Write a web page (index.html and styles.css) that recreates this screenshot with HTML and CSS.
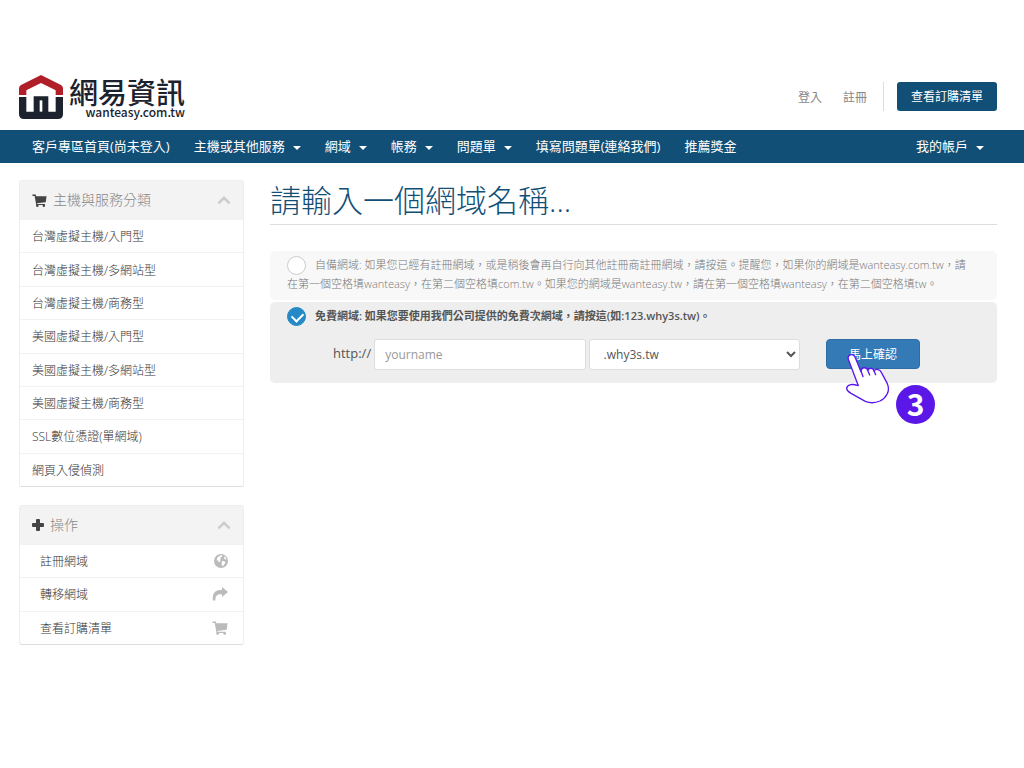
FILE: index.html
```
<!DOCTYPE html>
<html lang="zh-Hant">
<head>
<meta charset="utf-8">
<meta name="viewport" content="width=device-width, initial-scale=1">
<title>網易資訊</title>
<link rel="stylesheet" href="styles.css">
</head>
<body>
<svg class="sprite" aria-hidden="true">
  <symbol id="cart" viewBox="0 0 26 24">
    <path d="M0 1h6l.7 3H26l-1.500 11L8.500 17l.3 1.500H23v2H7L4 3.500H0z"/>
    <circle cx="9" cy="21.500" r="2.300"/><circle cx="21" cy="21.500" r="2.300"/>
  </symbol>
  <symbol id="chevron" viewBox="0 0 14 10"><path d="M7 1l6.500 6.500-1.800 1.800L7 4.700 2.300 9.300.5 7.500z"/></symbol>
</svg>

<header class="header">
  <a class="logo" href="#">
    <svg class="logo-mark" viewBox="0 0 132 132" aria-hidden="true">
      <path fill="#b01f27" d="M66 0l60 30q6 4 6 10v20H110V46L66 24 22 46v14H0V40q0-6 6-10z"/>
      <path fill="#1c222e" d="M0 66h22v44h22V64h44v46h22V66h22v51q0 15-15 15H15q-15 0-15-15z"/>
      <path fill="#fff" d="M62 76h8v34h-8z"/>
    </svg>
    <span class="logo-text">
      <span class="logo-name">網易資訊</span>
      <span class="logo-domain">wanteasy.com.tw</span>
    </span>
  </a>
  <div class="account">
    <a href="#">登入</a>
    <a href="#">註冊</a>
    <a class="order-button" href="#">查看訂購清單</a>
  </div>
</header>

<nav class="nav">
  <a href="#">客戶專區首頁(尚未登入)</a>
  <a class="drop" href="#">主機或其他服務</a>
  <a class="drop" href="#">網域</a>
  <a class="drop" href="#">帳務</a>
  <a class="drop" href="#">問題單</a>
  <a href="#">填寫問題單(連絡我們)</a>
  <a href="#">推薦獎金</a>
  <a class="drop nav-end" href="#">我的帳戶</a>
</nav>

<div class="page">
  <aside class="sidebar">
    <section class="panel">
      <h2 class="panel-title">
        <svg class="icon"><use href="#cart"/></svg>主機與服務分類
        <svg class="chevron"><use href="#chevron"/></svg>
      </h2>
      <div class="list">
        <a href="#">台灣虛擬主機/入門型</a>
        <a href="#">台灣虛擬主機/多網站型</a>
        <a href="#">台灣虛擬主機/商務型</a>
        <a href="#">美國虛擬主機/入門型</a>
        <a href="#">美國虛擬主機/多網站型</a>
        <a href="#">美國虛擬主機/商務型</a>
        <a href="#">SSL數位憑證(單網域)</a>
        <a href="#">網頁入侵偵測</a>
      </div>
    </section>
    <section class="panel">
      <h2 class="panel-title">
        <svg class="icon plus" viewBox="0 0 12 12"><path d="M4 1q0-1 1-1h2q1 0 1 1v3h3q1 0 1 1v2q0 1-1 1H8v3q0 1-1 1H5q-1 0-1-1V8H1Q0 8 0 7V5q0-1 1-1h3z"/></svg>操作
        <svg class="chevron"><use href="#chevron"/></svg>
      </h2>
      <div class="list actions">
        <a href="#">註冊網域
          <svg viewBox="0 0 14 14"><circle cx="7" cy="7" r="7"/><path fill="#fff" d="M6.500 1.200l2 .3-.7 1.300-1.600.8.6 1.400-1.300 1.200 1 .5-.3 1.600-1.800-.9-1.600-1.800.6-2.200zM8.300 6.800l2.300.6 1 1.300-1.400 1.600-1.500 2.200-1.100-2.200.2-1.500zM10.300 2.300l1.500 1.500.7 1.900-1.600-.4-.9-1.300z"/></svg>
        </a>
        <a href="#">轉移網域
          <svg class="wide" viewBox="0 0 16 14"><path d="M10 0l6 5-6 5V7.300C5 7 3.200 9 3.400 13.500H1Q-1 3 10 2.700z"/></svg>
        </a>
        <a href="#">查看訂購清單
          <svg class="wide"><use href="#cart"/></svg>
        </a>
      </div>
    </section>
  </aside>

  <main class="main">
    <h1 class="title">請輸入一個網域名稱...</h1>
    <form class="options">
      <div class="option">
        <input class="radio" type="radio" name="source" id="own">
        <label for="own">自備網域: 如果您已經有註冊網域，或是稍後會再自行向其他註冊商註冊網域，請按這。提醒您，如果你的網域是wanteasy.com.tw，請在第一個空格填wanteasy，在第二個空格填com.tw。如果您的網域是wanteasy.tw，請在第一個空格填wanteasy，在第二個空格填tw。</label>
      </div>
      <div class="option selected">
        <input class="radio" type="radio" name="source" id="free" checked>
        <label for="free">免費網域: 如果您要使用我們公司提供的免費次網域，請按這(如:123.why3s.tw)。</label>
        <div class="fields">
          <label class="protocol" for="name">http://</label>
          <input class="field" type="text" id="name" placeholder="yourname">
          <select class="field" aria-label="網域尾碼"><option>.why3s.tw</option></select>
          <div class="submit">
            <button class="submit-button" type="button">馬上確認</button>
            <svg class="pointer" viewBox="225 335 141 159" aria-hidden="true">
              <path d="M236 360C229 344 249 336 255 350L273 394C273 378 291 380 293 390C298 380 311 383 312 392C319 383 330 388 334 396L352 430C362 452 348 473 330 482C309 491 298 488 286 483L243 459C235 454 229 450 230 443C233 430 249 431 265 436Z"/>
              <path d="M273 392l6 17M293 390l6 14M312 391l5 12"/>
            </svg>
            <span class="step">3</span>
          </div>
        </div>
      </div>
    </form>
  </main>
</div>
</body>
</html>
```
FILE: styles.css
```
* { box-sizing: border-box; }

body {
  margin: 0;
  background: #fff;
  color: #666;
  font-family: "Open Sans", "Noto Sans CJK TC", sans-serif;
  font-size: 12px;
}

a { color: inherit; text-decoration: none; }
svg { fill: currentColor; }
.sprite { display: none; }

/* Header */
.header {
  display: flex;
  justify-content: space-between;
  align-items: flex-start;
  padding: 75px 27px 11px 19px;
}
.logo { display: flex; gap: 6px; color: #1c222e; }
.logo-mark { width: 44px; height: 44px; }
.logo-text {
  display: flex;
  flex-direction: column;
  align-items: flex-end;
  font-family: "Noto Sans CJK TC", sans-serif;
}
.logo-name { font-size: 29px; font-weight: 500; line-height: 32px; }
.logo-domain { font-size: 12px; font-weight: 500; line-height: 9px; }

.account {
  display: flex;
  align-items: center;
  gap: 21px;
  padding-top: 7px;
  color: #888;
}
.order-button {
  position: relative;
  margin-left: 9px;
  padding: 0 14px;
  border-radius: 3px;
  background: #114f77;
  color: #fff;
  line-height: 29px;
}
.order-button::before {
  content: "";
  position: absolute;
  left: -14px;
  top: 0;
  height: 100%;
  border-left: 1px solid #ddd;
}

/* Navigation */
.nav {
  display: flex;
  gap: 24px;
  padding: 0 40px 0 32px;
  background: #114f77;
  color: #fff;
  font-size: 13px;
  line-height: 33px;
}
.nav a { white-space: nowrap; }
.drop::after {
  content: "";
  display: inline-block;
  margin-left: 8px;
  vertical-align: middle;
  border: 4px solid transparent;
  border-top-color: currentColor;
  border-bottom: 0;
}
.nav-end { margin-left: auto; }

/* Columns */
.page {
  display: grid;
  grid-template-columns: 225px 1fr;
  gap: 26px;
  padding: 17px 27px 0 19px;
}
.sidebar { display: grid; gap: 18px; align-content: start; }
.panel {
  border: 1px solid #eee;
  border-bottom-color: #ddd;
  border-radius: 3px;
}
.panel-title {
  display: flex;
  align-items: center;
  gap: 6px;
  margin: 0;
  padding: 0 12px;
  background: #f3f3f3;
  color: #888;
  font-size: 14px;
  font-weight: 300;
  line-height: 38px;
}
.icon { width: 15px; height: 13px; color: #444; }
.plus { width: 12px; height: 12px; }
.chevron { width: 14px; height: 10px; margin-left: auto; color: #ccc; }
.list {
  display: grid;
  grid-auto-rows: 1fr;
  min-height: 267px;
}
.actions { min-height: 100px; }
.list a {
  display: flex;
  align-items: center;
  justify-content: space-between;
  padding: 0 12px;
  border-top: 1px solid #f2f2f2;
  font-weight: 300;
  color: #333;
}
.actions a { padding: 0 15px 0 20px; }
.list svg { width: 14px; height: 14px; color: #bbb; }
.list .wide { width: 16px; }

/* Main */
.title {
  margin: 0 0 26px;
  padding-bottom: 4px;
  border-bottom: 1px solid #ddd;
  color: #114f77;
  font-size: 31px;
  font-weight: 300;
  line-height: 40px;
}
.options { display: grid; gap: 2px; }
.option {
  padding: 4px 22px 7px 17px;
  border-radius: 5px;
  background: #f8f8f8;
  color: #777;
  font-size: 11px;
  font-weight: 300;
  line-height: 19px;
}
.selected {
  padding-bottom: 13px;
  background: #eee;
  color: #555;
  font-weight: 600;
}
.radio {
  appearance: none;
  float: left;
  width: 19px;
  height: 19px;
  margin: 1px 9px -4px 0;
  border: 1px solid #ccc;
  border-radius: 50%;
  background: #fff;
}
.radio:checked { position: relative; border-color: #2489c5; background: #2489c5; }
.radio:checked::after {
  content: "";
  position: absolute;
  left: 4px;
  top: 4px;
  width: 9px;
  height: 6px;
  border: solid #fff;
  border-width: 0 0 2px 2px;
  transform: rotate(-45deg);
}
.fields {
  display: flex;
  gap: 3px;
  padding: 14px 55px 0 46px;
  clear: both;
}
.protocol { font-size: 13px; font-weight: 400; line-height: 28px; }
.field {
  flex: 1;
  min-width: 0;
  height: 31px;
  padding: 0 10px;
  border: 1px solid #ddd;
  border-radius: 3px;
  background: #fff;
  color: #555;
  font: 12px "Open Sans", sans-serif;
}
.field::placeholder { color: #999; }
.submit { position: relative; margin-left: 23px; }
.submit-button {
  height: 30px;
  padding: 0 22px;
  border: 1px solid #2e6da4;
  border-radius: 4px;
  background: #337ab7;
  color: #fff;
  font: 12px "Open Sans", "Noto Sans CJK TC", sans-serif;
}
.pointer {
  position: absolute;
  left: 19px;
  top: 13px;
  width: 47px;
  height: 53px;
  fill: #fff;
  stroke: #5a17ee;
  stroke-width: 4;
  stroke-linecap: round;
  stroke-linejoin: round;
}
.step {
  position: absolute;
  left: 70px;
  top: 46px;
  width: 39px;
  height: 39px;
  border-radius: 50%;
  background: #5a17e8;
  color: #fff;
  font: 700 30px/37px "Noto Sans CJK TC", sans-serif;
  text-align: center;
}
```
